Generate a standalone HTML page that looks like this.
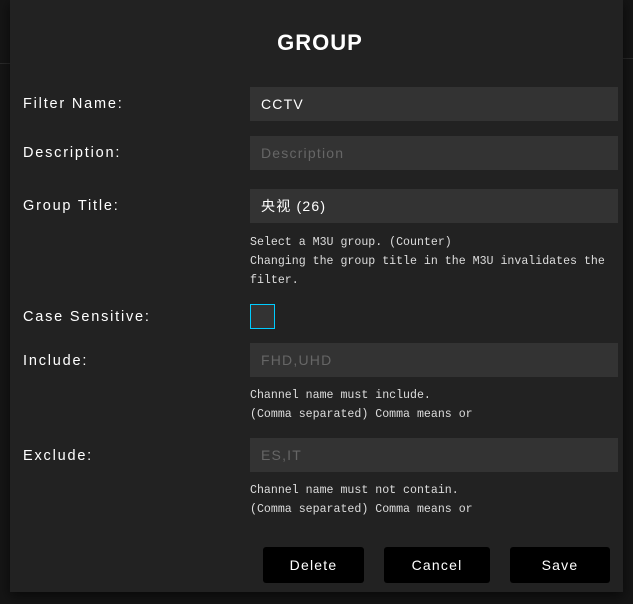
<!DOCTYPE html>
<html><head><meta charset="utf-8"><style>
*{margin:0;padding:0;box-sizing:border-box}
body{width:633px;height:604px;background:#151515;overflow:hidden;position:relative;font-family:"Liberation Sans","Noto Sans CJK SC",sans-serif;color:#fff}
.modal{position:absolute;left:10px;top:0;width:613px;height:592px;background:#222;box-shadow:0 4px 12px rgba(0,0,0,.6)}
.t{position:absolute;left:0;width:640px;top:30px;text-align:center;font-size:22px;font-weight:bold;letter-spacing:1px}
.l{position:absolute;left:23px;font-size:14.5px;letter-spacing:1.8px;transform:translateY(-50%)}
.in{position:absolute;left:250px;width:368px;height:34px;background:#333;font-size:14px;letter-spacing:1.2px;padding-left:11px;line-height:34px}
.ph{color:#666}
.h{position:absolute;left:250px;font-family:"Liberation Mono",monospace;font-size:11.6px;line-height:19px;color:#ddd}
.cb{position:absolute;left:250px;top:304px;width:25px;height:25px;background:#333;border:1px solid #0cf}
.b{position:absolute;top:547px;height:36px;background:#000;border-radius:3px;font-size:14px;letter-spacing:1.2px;text-align:center;line-height:36px}
.s{position:absolute;background:#2a2a2a}
</style></head><body>
<div class="s" style="left:0;top:63px;width:10px;height:1px"></div>
<div class="s" style="left:623px;top:58px;width:10px;height:1px"></div>
<div class="modal"></div>
<div class="t">GROUP</div>
<div class="l" style="top:104px">Filter Name:</div>
<div class="in" style="top:87px">CCTV</div>
<div class="l" style="top:153px">Description:</div>
<div class="in ph" style="top:136px">Description</div>
<div class="l" style="top:206px">Group Title:</div>
<div class="in" style="top:189px">央视 (26)</div>
<div class="h" style="top:233px">Select a M3U group. (Counter)<br>Changing the group title in the M3U invalidates the<br>filter.</div>
<div class="l" style="top:317px">Case Sensitive:</div>
<div class="cb"></div>
<div class="l" style="top:361px">Include:</div>
<div class="in ph" style="top:343px">FHD,UHD</div>
<div class="h" style="top:386px">Channel name must include.<br>(Comma separated) Comma means or</div>
<div class="l" style="top:456px">Exclude:</div>
<div class="in ph" style="top:438px">ES,IT</div>
<div class="h" style="top:481px">Channel name must not contain.<br>(Comma separated) Comma means or</div>
<div class="b" style="left:263px;width:101px">Delete</div>
<div class="b" style="left:384px;width:106px">Cancel</div>
<div class="b" style="left:510px;width:100px">Save</div>
</body></html>
